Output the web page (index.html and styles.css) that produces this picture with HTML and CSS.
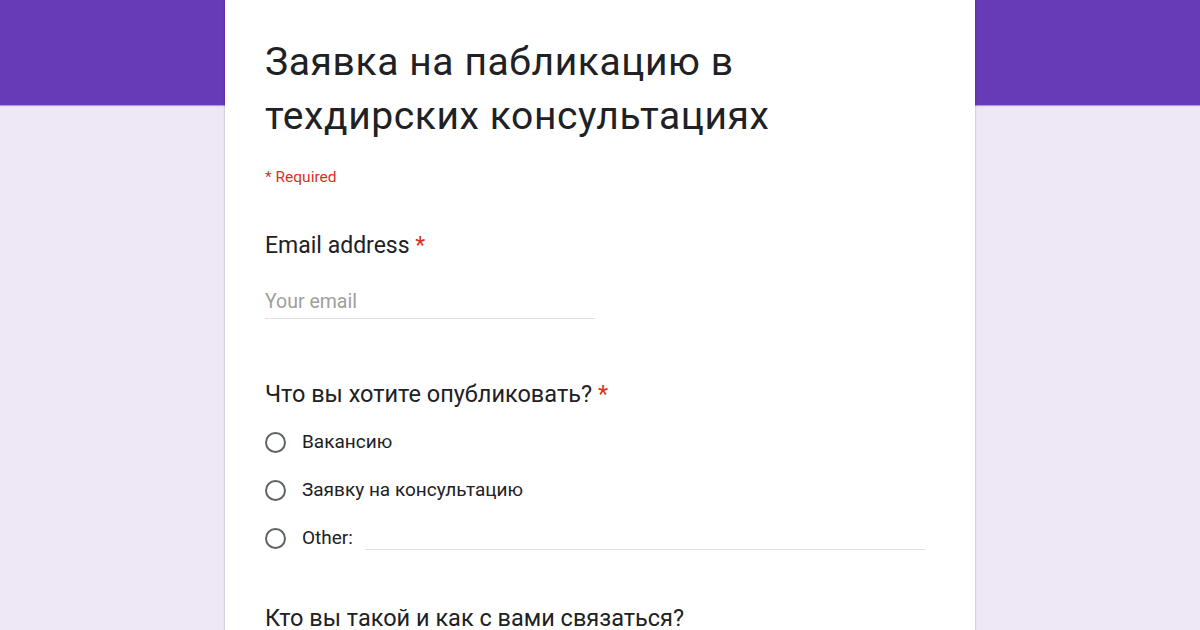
FILE: index.html
```html
<!DOCTYPE html>
<html lang="ru">
<head>
  <meta charset="UTF-8" />
  <meta name="viewport" content="width=device-width, initial-scale=1.0"/>
  <title>Заявка на пабликацию в техдирских консультациях</title>
  <link rel="stylesheet" href="styles.css">
</head>
<body>

  <div class="band"></div>

  <div class="page">
    <form class="card">
      <h1 class="title">Заявка на пабликацию в техдирских консультациях</h1>
      <div class="required">* Required</div>

      <div class="question q-email">
        <div class="q-title">Email address <span class="star">*</span></div>
        <div class="text-input">Your email</div>
      </div>

      <div class="question q-kind">
        <div class="q-title">Что вы хотите опубликовать? <span class="star">*</span></div>
        <div class="options">
          <label class="option"><span class="radio"></span><span class="opt-label">Вакансию</span></label>
          <label class="option"><span class="radio"></span><span class="opt-label">Заявку на консультацию</span></label>
          <label class="option"><span class="radio"></span><span class="opt-label">Other:</span><span class="other-line"></span></label>
        </div>
      </div>

      <div class="question q-who">
        <div class="q-title">Кто вы такой и как с вами связаться?</div>
      </div>
    </form>
  </div>

</body>
</html>
```

FILE: styles.css
```css
body {
  margin: 0;
  font-family: Roboto, "Liberation Sans", Arial, sans-serif;
  background: #ede7f6;
  color: #202124;
  overflow: hidden;
}
.band {
  height: 105px;
  background: #673ab7;
  box-shadow: 0 1px 1px rgba(60, 20, 120, 0.35);
}
.page {
  margin-top: -105px;
  position: relative;
}
.card {
  width: 670px;
  height: 700px;
  margin: 0 auto;
  padding: 35px 40px 0;
  background: #fff;
  box-shadow: 0 0 2px rgba(0, 0, 0, 0.28);
}
.title {
  margin: 0;
  font-size: 39px;
  line-height: 54px;
  letter-spacing: 0.6px;
  font-weight: 400;
  color: #202124;
  width: 600px;
}
.required {
  margin-top: 24px;
  font-size: 15.5px;
  line-height: 20px;
  color: #d93025;
}
.q-title {
  font-size: 23.5px;
  line-height: 30px;
  color: #202124;
}
.star {
  color: #d93025;
}
.q-email {
  margin-top: 44px;
}
.q-email .q-title {
  font-size: 23px;
}
.text-input {
  margin-top: 29px;
  width: 330px;
  padding-bottom: 4px;
  border-bottom: 1px solid #e0e0e0;
  font-size: 19.5px;
  line-height: 24px;
  color: #9e9e9e;
}
.q-kind {
  margin-top: 60px;
}
.options {
  margin-top: 9px;
}
.option {
  display: flex;
  align-items: center;
  height: 48px;
}
.radio {
  width: 17px;
  height: 17px;
  border: 2px solid #5f6368;
  border-radius: 50%;
  flex: none;
}
.opt-label {
  margin-left: 16px;
  font-size: 19px;
  line-height: 24px;
  color: #202124;
}
.other-line {
  flex: 1;
  height: 22px;
  margin: 0 10px 0 12px;
  border-bottom: 1px solid #e0e0e0;
}
.q-who {
  margin-top: 41px;
}
```
